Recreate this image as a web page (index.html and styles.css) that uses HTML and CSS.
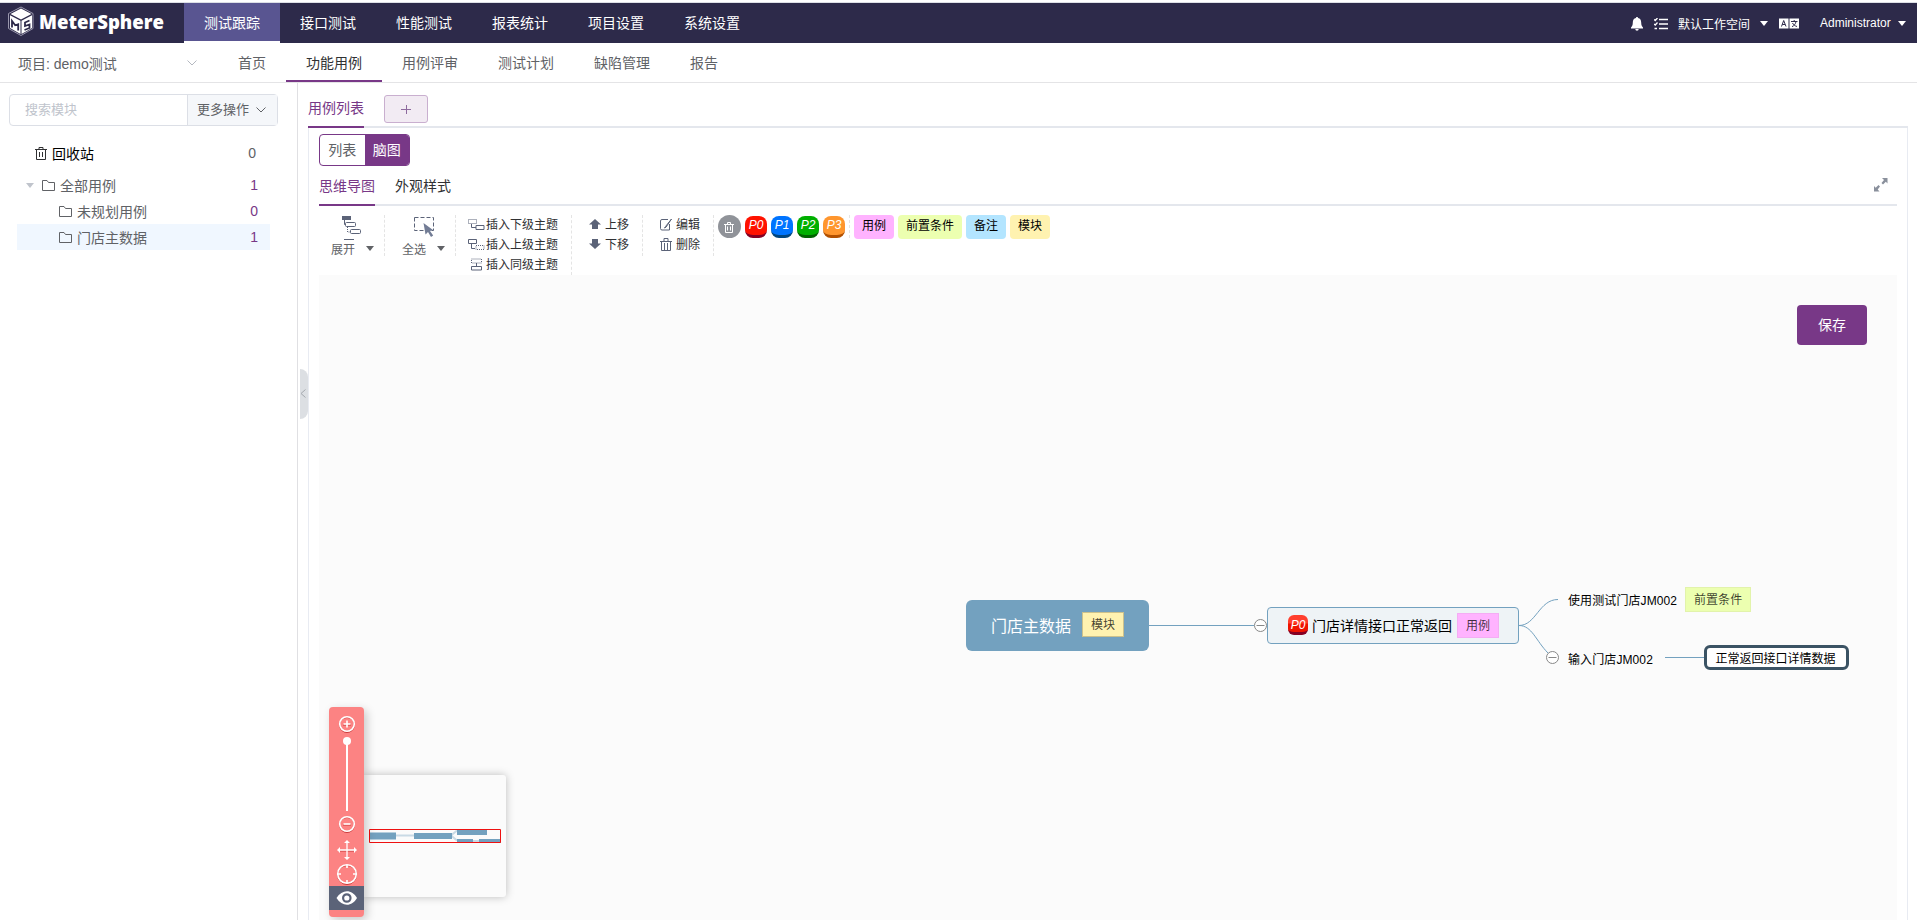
FILE: index.html
```html
<!DOCTYPE html>
<html lang="zh-CN">
<head>
    <meta charset="UTF-8">
    <meta name="viewport" content="width=device-width, initial-scale=1.0">
    <title>MeterSphere</title>
    <link rel="stylesheet" href="styles.css">
</head>
<body>
    <header class="header">
        <svg class="logo" width="184" height="40" viewBox="0 0 184 40">
            <path d="M21 4 33 10.500V25.500L21 32.500 8.500 25.500V10.500Z" fill="none" stroke="#9a97ad"/>
            <path d="M21 5.500 31.500 11 21 16.500 10.500 11Z" fill="#fff"/>
            <path d="M10 12.300 20.500 17.800V31L10 25ZM32 12.300 21.500 17.800V31L32 25Z" fill="#fff"/>
            <path d="M12 24.500V18l3.200 4.300 3-1V27.500M29.500 17.500 25 19.500v3.500l4.500-1.500v3.500L24.500 27" fill="none" stroke="#2d2a4a" stroke-width="1.800"/>
            <text x="39" y="26" textLength="125" lengthAdjust="spacingAndGlyphs">MeterSphere</text>
        </svg>
        <nav class="menu">
            <a class="active">测试跟踪</a>
            <a>接口测试</a>
            <a>性能测试</a>
            <a>报表统计</a>
            <a>项目设置</a>
            <a>系统设置</a>
        </nav>
        <div class="header-right">
            <svg class="bell" width="12" height="14" viewBox="0 0 12 14"><path d="M6 0c.8 0 1 .5 1 1 2.300.5 3.200 2.200 3.200 4.500 0 2.700.6 3.800 1.800 5V11.500H0V10.500c1.200-1.200 1.800-2.300 1.800-5C1.800 3.200 2.700 1.500 5 1c0-.5.2-1 1-1ZM4.300 12h3.400a1.700 1.700 0 0 1-3.400 0Z" fill="#fff"/></svg>
            <svg class="tasks" width="14" height="12" viewBox="0 0 14 12"><path d="M5 1.500h9M5 6h9M5 10.500h9M0 1.500l1.200 1L3.500 0M0 6l1.200 1 2.300-2.500M.5 10.500H3" fill="none" stroke="#fff" stroke-width="1.300"/></svg>
            <span class="workspace">默认工作空间</span>
            <i class="caret"></i>
            <svg class="lang" width="20" height="11" viewBox="0 0 20 11"><path d="M0 .5h9.500v10H0ZM10.500.5H20v10h-9.500Z" fill="#fff"/><path d="M2.500 8.500 4.700 2.500 7 8.500M3.300 6.500H6M12 3.500h6.500M15.200 2v1.500M13 8.700c2-1 3.500-2.500 4-5M13.500 5c.8 1.700 2.500 3 4.500 3.500" fill="none" stroke="#2d2a4a"/></svg>
            <span class="user">Administrator</span>
            <i class="caret"></i>
        </div>
    </header>

    <div class="subnav">
        <div class="project">
            <span>项目: demo测试</span>
            <svg width="10" height="6" viewBox="0 0 10 6"><path d="M.5.5 5 5 9.500.5" fill="none" stroke="#b4b8c0"/></svg>
        </div>
        <nav class="submenu">
            <a>首页</a>
            <a class="active">功能用例</a>
            <a>用例评审</a>
            <a>测试计划</a>
            <a>缺陷管理</a>
            <a>报告</a>
        </nav>
    </div>

    <div class="container">
        <aside class="sidebar">
            <div class="search">
                <span class="search-input">搜索模块</span>
                <span class="search-more">更多操作
                    <svg width="10" height="6" viewBox="0 0 10 6"><path d="M.5.5 5 5 9.500.5" fill="none" stroke="#606266"/></svg>
                </span>
            </div>
            <div class="recycle">
                <svg width="12" height="13" viewBox="0 0 12 13"><path d="M0 2.500h12M1.500 2.500v10h9v-10M4 2.500v-2h4v2M4.500 5v5M7.500 5v5" fill="none" stroke="#303133"/></svg>
                <span>回收站</span>
                <b>0</b>
            </div>
            <div class="tree">
                <div class="row all">
                    <i class="caret"></i>
                    <svg class="folder" width="13" height="11" viewBox="0 0 13 11"><path d="M.5.500H5L6.500 2.500H12.500V10.500H.5Z" fill="none" stroke="#606266"/></svg>
                    <span>全部用例</span><b>1</b>
                </div>
                <div class="row child">
                    <svg class="folder" width="13" height="11" viewBox="0 0 13 11"><path d="M.5.500H5L6.500 2.500H12.500V10.500H.5Z" fill="none" stroke="#606266"/></svg>
                    <span>未规划用例</span><b>0</b>
                </div>
                <div class="row child selected">
                    <svg class="folder" width="13" height="11" viewBox="0 0 13 11"><path d="M.5.500H5L6.500 2.500H12.500V10.500H.5Z" fill="none" stroke="#606266"/></svg>
                    <span>门店主数据</span><b>1</b>
                </div>
            </div>
        </aside>

        <main class="main">
            <div class="collapse">
                <svg width="6" height="9" viewBox="0 0 6 9"><path d="M5.500.5 1 4.500l4.500 4" fill="none" stroke="#a4a8ae"/></svg>
            </div>
            <div class="tabs">
                <span class="tab active">用例列表</span>
                <span class="tab-add"><svg width="11" height="11" viewBox="0 0 11 11"><path d="M0 5.500h10M5.500 1v9" stroke="#8e6a9e"/></svg></span>
            </div>
            <div class="content">
                <div class="switch"><span>列表</span><span class="on">脑图</span></div>
                <div class="tabs mind-tabs">
                    <span class="tab active">思维导图</span>
                    <span class="tab">外观样式</span>
                    <svg class="full" width="14" height="14" viewBox="0 0 14 14"><path d="M8 0h5.500v5.500L11.800 3.800 9 6.500 7.500 5 10 2ZM5.500 13.500H0V8l1.700 1.700L4.500 7 6 8.500 3.700 11.500Z" fill="#8a909c"/></svg>
                </div>

                <div class="toolbar">
                    <div class="group big expand">
                        <svg width="19" height="25" viewBox="0 0 19 25"><path d="M0 0h9v4H0Z" fill="#5b6378"/><path d="M2.500 4v4.500H4M4.500 6.500h8a1 1 0 0 1 1 1v2a1 1 0 0 1-1 1h-8a1 1 0 0 1-1-1v-2a1 1 0 0 1 1-1ZM9.500 13.500h8a1 1 0 0 1 1 1v2a1 1 0 0 1-1 1h-8a1 1 0 0 1-1-1v-2a1 1 0 0 1 1-1ZM2 23.500h10" fill="none" stroke="#5b6378"/><path d="M5.500 11v5H8" fill="none" stroke="#5b6378" stroke-dasharray="1 1"/></svg>
                        <div>展开<i class="caret"></i></div>
                    </div>
                    <div class="group big select">
                        <svg width="20" height="25" viewBox="0 0 20 25"><path d="M.5 1.500h19v13H.5Z" fill="none" stroke="#5b6378" stroke-dasharray="4 2"/><path d="M9.500 7 11.500 18.500 14 16l3 5 2.200-1.500-3.200-4.500 3-1Z" fill="#727c95"/></svg>
                        <div>全选<i class="caret"></i></div>
                    </div>
                    <div class="group insert">
                        <div class="tool"><svg width="17" height="13" viewBox="0 0 17 13"><path d="M.5 1.500h8v4h-8Z" fill="none" stroke="#5b6378" stroke-dasharray="1 1"/><path d="M3.500 6v3.500H8M8 7.500h8v4H8Z" fill="none" stroke="#5b6378"/></svg>插入下级主题</div>
                        <div class="tool"><svg width="17" height="13" viewBox="0 0 17 13"><path d="M8 7.500h8v4H8Z" fill="none" stroke="#5b6378" stroke-dasharray="1 1"/><path d="M.5 1.500h8v4h-8ZM3.500 6v4.500H7" fill="none" stroke="#5b6378"/></svg>插入上级主题</div>
                        <div class="tool"><svg width="17" height="13" viewBox="0 0 17 13"><path d="M3.500 1h10v4h-10Z" fill="none" stroke="#5b6378" stroke-dasharray="1 1"/><path d="M3.500 8.500h10v3.500h-10ZM8.500 5v3.500" fill="none" stroke="#5b6378"/></svg>插入同级主题</div>
                    </div>
                    <div class="group move">
                        <div class="tool"><svg width="12" height="11" viewBox="0 0 12 11"><path d="M6 0 12 5.500H9V10H3V5.500H0Z" fill="#5b6378"/></svg>上移</div>
                        <div class="tool"><svg width="12" height="11" viewBox="0 0 12 11"><path d="M6 10 12 4.500H9V0H3V4.500H0Z" fill="#5b6378"/></svg>下移</div>
                    </div>
                    <div class="group edit">
                        <div class="tool"><svg width="12" height="13" viewBox="0 0 12 13"><path d="M8 1.500H2a1.500 1.500 0 0 0-1.500 1.500v7.500A1.500 1.500 0 0 0 2 12h7.500V6M11.500 1 5.500 8.500 4.500 10l1.500-.8Z" fill="none" stroke="#5b6378"/></svg>编辑</div>
                        <div class="tool"><svg width="12" height="13" viewBox="0 0 12 13"><path d="M0 3.500h12M1.500 3.500v9h9v-9M4 3.500v-3h4v3M4.500 5v7M7.500 5v7" fill="none" stroke="#5b6378"/></svg>删除</div>
                    </div>
                    <div class="group priority">
                        <span class="p-del"><svg width="12" height="13" viewBox="0 0 12 13"><path d="M1 3.500h10M2.500 3.500v8h7v-8M4.500 3.500v-2h3v2M4.500 5.500v4M7.500 5.500v4" fill="none" stroke="#fff"/></svg></span>
                        <span class="p p0">P0</span>
                        <span class="p p1">P1</span>
                        <span class="p p2">P2</span>
                        <span class="p p3">P3</span>
                    </div>
                    <div class="tags">
                        <span class="tag pink">用例</span>
                        <span class="tag green">前置条件</span>
                        <span class="tag blue">备注</span>
                        <span class="tag yellow">模块</span>
                    </div>
                </div>

                <div class="canvas">
                    <svg class="links" width="1578" height="645" viewBox="0 0 1578 645">
                        <g fill="none" stroke="#73a1bf">
                            <path d="M830 350.500H935M1200 350.500C1217 350.500 1220 324.500 1239 324.500M1200 350.500C1213 350.500 1217 366 1229 378M1346 382.500H1385"/>
                        </g>
                        <g fill="#fff" stroke="#888">
                            <circle cx="941.500" cy="350.500" r="6"/>
                            <circle cx="1233.500" cy="382.500" r="6"/>
                            <path d="M937.500 350.500h8M1229.500 382.500h8"/>
                        </g>
                    </svg>
                    <div class="node root">门店主数据<span class="label yellow">模块</span></div>
                    <div class="node case"><span class="badge">P0</span>门店详情接口正常返回<span class="label pink">用例</span></div>
                    <div class="node pre">使用测试门店JM002<span class="label green">前置条件</span></div>
                    <div class="node step">输入门店JM002</div>
                    <div class="node result">正常返回接口详情数据</div>
                    <div class="save">保存</div>

                    <div class="preview">
                        <svg width="142" height="122" viewBox="0 0 142 122">
                            <path d="M32 60.500H50M87 60.500l6-5M87 60.500l6 5M108 66h8" fill="none" stroke="#c9dae5" stroke-width="2"/>
                            <path d="M5 57.500H32V64.500H5ZM50 58H88V64H50ZM93 55H123V60H93ZM93 64H109V68H93ZM115 64H137V68H115Z" fill="#73a1bf"/>
                            <path d="M5.500 54.500H136.500V67.500H5.500Z" fill="none" stroke="#ee1111"/>
                        </svg>
                    </div>
                    <div class="navigator">
                        <svg width="35" height="210" viewBox="0 0 35 210">
                            <path d="M0 179H35V203H0Z" fill="#5b6378"/>
                            <g transform="translate(0 1)" fill="none" stroke="#c93a3a"><circle cx="18" cy="17" r="7.500"/><circle cx="18" cy="117" r="7.500"/><circle cx="18" cy="167" r="9.500"/><path d="M14 17h8M14 117h8M9 143h18"/></g>
                            <g fill="none" stroke="#fff" stroke-width="1.600">
                                <circle cx="18" cy="17" r="7.300"/><path d="M14.500 17h7M18 13.500v7"/>
                                <path d="M18 34v70" stroke-width="2"/>
                                <circle cx="18" cy="117" r="7.300"/><path d="M14.500 117h7"/>
                                <path d="M9 143h18M18 134v18" stroke-width="1.300"/>
                                <circle cx="18" cy="167" r="9.300"/><path d="M18 158v3M18 173v3M9 167h3M24 167h3"/>
                            </g>
                            <path d="M18 133l3 3h-6ZM18 153l3-3h-6ZM8 143l3-3v6ZM28 143l-3-3v6Z" fill="#fff"/>
                            <circle cx="18" cy="34" r="4" fill="#fff"/>
                            <path d="M7.500 191C13 182 23 182 28 191 23 200 13 200 7.500 191Z" fill="#fff"/>
                            <circle cx="17.800" cy="191" r="3.700" fill="#fff" stroke="#5b6378" stroke-width="2.200"/>
                        </svg>
                    </div>
                </div>
            </div>
        </main>
    </div>
</body>
</html>
```
FILE: styles.css
```css
* {
    box-sizing: border-box;
}
body {
    margin: 0;
    height: 920px;
    overflow: hidden;
    display: flex;
    flex-direction: column;
    background: #fff;
    color: #606266;
    font-family: "Liberation Sans", "Noto Sans CJK SC", sans-serif;
    font-size: 14px;
}
svg {
    display: block;
    flex: none;
}
span, a, .node, .tool {
    white-space: nowrap;
}
.caret {
    width: 0;
    height: 0;
    border: 4px solid transparent;
    border-top: 5px solid currentColor;
    border-bottom: 0;
}

/* header */
.header {
    flex: none;
    display: flex;
    height: 41px;
    margin-top: 2px;
    border-top: 1px solid #dcdfe6;
    background: #2d2a4a;
    color: #fff;
}
.logo text {
    font-family: "Open Sans", sans-serif;
    font-weight: 800;
    font-size: 20px;
    fill: #fff;
}
.menu {
    display: flex;
}
.menu a {
    padding: 0 20px;
    line-height: 40px;
    height: 40px;
}
.menu .active {
    background: #595591;
    border-bottom: 2px solid #fff;
}
.header-right {
    margin-left: auto;
    display: flex;
    align-items: center;
    padding-right: 11px;
    font-size: 12px;
}
.bell {
    margin-top: 2px;
}
.tasks {
    margin: 2px 10px 0 11px;
}
.workspace {
    width: 72px;
    margin-right: 10px;
}
.lang {
    margin: 0 21px 0 11px;
}
.user {
    width: 70px;
    margin-right: 8px;
}

/* second level menu */
.subnav {
    flex: none;
    display: flex;
    height: 40px;
    padding-left: 18px;
    border-bottom: 1px solid #e4e4e6;
}
.project {
    width: 200px;
    padding-right: 21px;
    display: flex;
    align-items: center;
    justify-content: space-between;
}
.submenu {
    display: flex;
}
.submenu a {
    padding: 0 20px;
    height: 39px;
    line-height: 40px;
}
.submenu .active {
    color: #303133;
    border-bottom: 2px solid #783887;
}

/* module tree */
.container {
    flex: 1;
    display: flex;
    min-height: 0;
}
.sidebar {
    width: 298px;
    border-right: 1px solid #e0e0e3;
    padding: 11px 0 0 9px;
}
.search {
    display: flex;
    width: 269px;
    height: 32px;
    border: 1px solid #dcdfe6;
    border-radius: 4px;
    font-size: 13px;
    line-height: 30px;
}
.search-input {
    width: 177px;
    padding-left: 15px;
    color: #c0c4cc;
}
.search-more {
    flex: 1;
    display: flex;
    align-items: center;
    gap: 7px;
    padding-left: 9px;
    background: #f5f7fa;
    border-left: 1px solid #dcdfe6;
}
.recycle {
    display: flex;
    align-items: center;
    height: 26px;
    margin: 14px 0 6px 26px;
    color: #000;
}
.recycle span {
    margin-left: 5px;
}
.sidebar b {
    margin-left: auto;
    font-weight: normal;
    color: #783887;
}
.recycle b {
    margin-right: 41px;
    color: #606266;
}
.tree {
    width: 253px;
    margin-left: 8px;
}
.row {
    display: flex;
    align-items: center;
    height: 26px;
    padding: 0 12px 0 42px;
}
.row.all {
    padding-left: 9px;
}
.row .folder {
    margin-right: 5px;
}
.row .caret {
    color: #c0c4cc;
    margin-right: 8px;
}
.row.selected {
    background: #f0f7ff;
}

/* main */
.main {
    position: relative;
    flex: 1;
    display: flex;
    flex-direction: column;
    padding: 0 9px 0 10px;
}
.collapse {
    position: absolute;
    left: 2px;
    top: 286px;
    width: 8px;
    height: 50px;
    padding-top: 20px;
    background: #dcdfe3;
    border-radius: 0 8px 8px 0;
}
.tabs {
    flex: none;
    display: flex;
    height: 45px;
    border-bottom: 2px solid #e4e7ed;
}
.tab {
    height: 45px;
    line-height: 50px;
    margin-right: 20px;
    color: #303133;
}
.tab.active {
    color: #783887;
    border-bottom: 2px solid #783887;
}
.tab-add {
    display: flex;
    align-items: center;
    justify-content: center;
    width: 44px;
    height: 28px;
    margin-top: 12px;
    background: #f2ebf3;
    border: 1px solid #c9afcf;
    border-radius: 3px;
}
.content {
    flex: 1;
    display: flex;
    flex-direction: column;
    padding: 6px 10px 0;
    border: 1px solid #e8ebf2;
    border-width: 0 1px;
}
.switch {
    display: flex;
    width: 91px;
    height: 32px;
    line-height: 30px;
    border: 1px solid #783887;
    border-radius: 4px;
    overflow: hidden;
}
.switch span {
    width: 45px;
    text-align: center;
}
.switch .on {
    background: #783887;
    color: #fff;
}
.mind-tabs {
    height: 40px;
}
.mind-tabs .tab {
    height: 40px;
    line-height: 41px;
}
.full {
    margin: 12px 9px 0 auto;
}

/* toolbar */
.toolbar {
    flex: none;
    display: flex;
    align-items: flex-start;
    height: 69px;
    padding-top: 9px;
    font-size: 12px;
    color: #303133;
}
.group {
    height: 41px;
    border-right: 1px dashed #e4e4e4;
}
.big {
    width: 71px;
    color: #606266;
}
.big div {
    display: flex;
    align-items: center;
    gap: 11px;
    height: 16px;
    margin-top: -1px;
}
.expand {
    width: 66px;
    padding: 1px 0 0 12px;
}
.expand svg {
    margin-left: 11px;
}
.select {
    padding: 1px 0 0 17px;
}
.select svg {
    margin-left: 12px;
}
.tool {
    display: flex;
    align-items: center;
    height: 20px;
}
.insert {
    width: 116px;
    height: 60px;
    padding-left: 12px;
}
.insert svg {
    margin-right: 1px;
}
.insert, .move, .edit {
    padding-bottom: 1px;
    line-height: 18px;
}
.insert .tool, .move .tool, .edit .tool {
    padding-bottom: 1px;
}
.move {
    width: 71px;
    padding-left: 17px;
}
.move svg {
    margin-right: 4px;
}
.edit {
    width: 71px;
    padding-left: 17px;
}
.edit svg {
    margin-right: 4px;
}
.priority {
    display: flex;
    gap: 4px;
    width: 136px;
    height: 23px;
    padding-left: 4px;
}
.p-del {
    width: 23px;
    height: 23px;
    padding: 6px 5px;
    border-radius: 50%;
    background: #909399;
}
.p {
    width: 22px;
    height: 22px;
    margin-top: 1px;
    border-radius: 8px;
    color: #fff;
    font-style: italic;
    line-height: 18px;
    text-align: center;
}
.p0 {
    background: #ff1200;
    border-bottom: 3px solid #840023;
}
.p1 {
    background: #0074ff;
    border-bottom: 3px solid #01467f;
}
.p2 {
    background: #00af00;
    border-bottom: 3px solid #006300;
}
.p3 {
    background: #ff962e;
    border-bottom: 3px solid #b25000;
}
.tags {
    display: flex;
    gap: 4px;
    margin-left: 4px;
}
.tag {
    height: 24px;
    line-height: 22px;
    padding: 0 8px;
    border-radius: 4px;
    color: #000;
}
.pink {
    background: #ffb3ff;
}
.green {
    background: #ecffb0;
}
.blue {
    background: #b3e5ff;
}
.yellow {
    background: #fff2b0;
}

/* mind map */
.canvas {
    position: relative;
    flex: 1;
    overflow: hidden;
    background: #fbfbfb;
}
.links {
    position: absolute;
    left: 0;
    top: 0;
}
.node {
    position: absolute;
    display: flex;
    align-items: center;
    color: #000;
    font-size: 12px;
}
.label {
    width: 42px;
    height: 25px;
    line-height: 24px;
    border: 1px solid rgba(120, 100, 120, 0.08);
    text-align: center;
    font-size: 12px;
    color: rgba(0, 0, 0, 0.75);
}
.root {
    left: 647px;
    top: 325px;
    width: 183px;
    height: 51px;
    padding: 0 0 2px 25px;
    border-radius: 6px;
    background: #73a1bf;
    color: #fff;
    font-size: 16px;
}
.root .label {
    margin-left: 11px;
    border-color: rgba(0, 0, 0, 0.2);
}
.case {
    left: 948px;
    top: 332px;
    width: 252px;
    height: 37px;
    padding: 0 0 1px 20px;
    border: 1px solid #73a1bf;
    border-radius: 4px;
    background: #eef3f6;
    font-size: 14px;
}
.case .label {
    margin-left: 5px;
}
.badge {
    width: 20px;
    height: 20px;
    margin-right: 4px;
    border-radius: 6px;
    border-bottom: 3px solid #840023;
    background: linear-gradient(#ff3f2e 45%, #ee1300 55%);
    color: #fff;
    font-size: 12px;
    font-style: italic;
    line-height: 20px;
    text-align: center;
}
.pre {
    left: 1249px;
    top: 311px;
    height: 26px;
}
.pre .label {
    width: 66px;
    margin-left: 8px;
}
.step, .pre {
    letter-spacing: 0.1px;
}
.step {
    left: 1249px;
    top: 373px;
    height: 20px;
}
.result {
    left: 1385px;
    top: 370px;
    width: 145px;
    height: 25px;
    padding-right: 2px;
    justify-content: center;
    border: 3px solid #3b5364;
    border-radius: 6px;
    background: #fff;
}
.save {
    position: absolute;
    right: 30px;
    top: 30px;
    width: 70px;
    height: 40px;
    line-height: 40px;
    text-align: center;
    border-radius: 4px;
    background: #783887;
    color: #fff;
}
.navigator {
    position: absolute;
    left: 10px;
    top: 432px;
    width: 35px;
    height: 210px;
    border-radius: 4px;
    background: #fc8383;
    box-shadow: 3px 3px 10px rgba(0, 0, 0, 0.2);
}
.preview {
    position: absolute;
    left: 45px;
    top: 500px;
    width: 142px;
    height: 122px;
    border-radius: 0 3px 3px 0;
    background: #fbfbfb;
    box-shadow: 0 0 8px rgba(0, 0, 0, 0.25);
}
```
